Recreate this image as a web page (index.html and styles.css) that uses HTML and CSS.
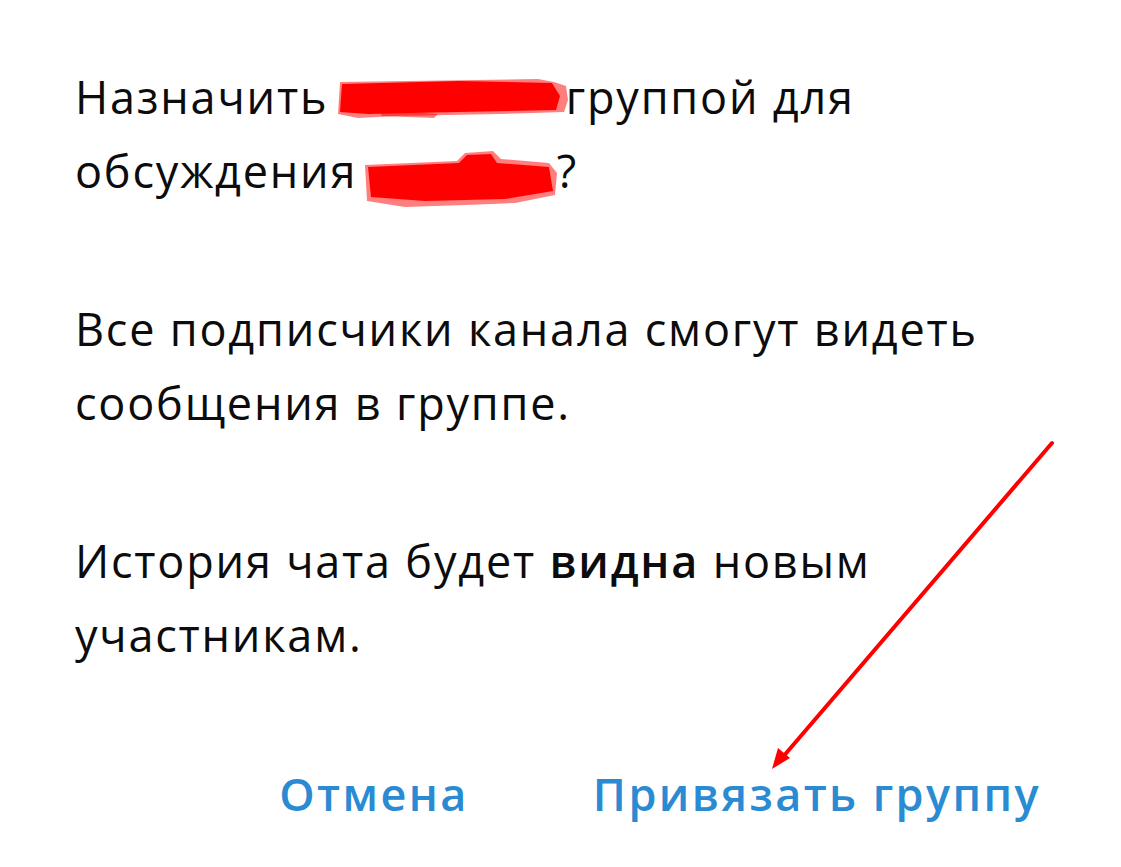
FILE: index.html
```html
<!DOCTYPE html>
<html lang="ru">
<head>
<meta charset="utf-8">
<title>Привязать группу</title>
<link rel="stylesheet" href="styles.css">
</head>
<body>
<div class="dialog">
  <div class="content">
    <p class="para">Назначить <span class="redact redact-a"><svg viewBox="0 0 230 40" width="230" height="40"><path d="M2 4 L200 1 L216 4 L228 8 L230 22 L226 34 L160 36 L60 38 L20 40 L0 36 Z" fill="#ff0000" opacity="0.5"/><path d="M4 6 L120 3 L214 5 L222 18 L218 32 L120 34 L30 36 L2 34 Z" fill="#ff0000"/><path d="M40 32 L100 36 L96 40 L44 38 Z" fill="#ff0000" opacity="0.5"/></svg></span>группой для обсуждения <span class="redact redact-b"><svg viewBox="0 0 192 56" width="192" height="56"><path d="M0 14 L92 10 L100 2 L128 0 L136 8 L184 12 L192 22 L190 44 L150 52 L100 54 L40 56 L2 50 Z" fill="#ff0000" opacity="0.5"/><path d="M3 16 L94 12 L102 4 L126 3 L132 12 L184 16 L188 40 L140 48 L60 50 L6 46 Z" fill="#ff0000"/></svg></span>?</p>
    <p class="para">Все подписчики канала смогут видеть сообщения в группе.</p>
    <p class="para">История чата будет <b class="strong">видна</b> новым участникам.</p>
  </div>
  <div class="actions">
    <span class="btn">Отмена</span>
    <span class="btn">Привязать группу</span>
  </div>
</div>
<svg class="arrow" viewBox="0 0 1121 867" width="1121" height="867">
  <line x1="1052" y1="443" x2="782" y2="758" stroke="#ff0000" stroke-width="4" stroke-linecap="round"/>
  <polygon points="772,769 778,748 790,758" fill="#ff0000"/>
</svg>
</body>
</html>
```

FILE: styles.css
```css
html, body {
  margin: 0;
  padding: 0;
  background: #ffffff;
}
body {
  width: 1121px;
  height: 867px;
  overflow: hidden;
  position: relative;
  font-family: "Open Sans", "Noto Sans", sans-serif;
  color: #0c0c0c;
}
.dialog {
  display: flex;
  flex-direction: column;
  padding: 60px 80px 0 75px;
}
.content {
  display: flex;
  flex-direction: column;
  gap: 84px;
  width: 960px;
}
.para {
  margin: 0;
  font-size: 45px;
  line-height: 74px;
  letter-spacing: 1.8px;
}
.strong {
  font-weight: 600;
}
.redact {
  display: inline-block;
  vertical-align: middle;
  line-height: 0;
}
.redact-a {
  width: 230px;
  height: 40px;
  margin-left: -4px;
  margin-right: -2px;
  transform: translateY(-4px);
}
.redact-b {
  width: 192px;
  height: 56px;
  margin-left: -6px;
  transform: translateY(3px);
}
.actions {
  display: flex;
  justify-content: flex-end;
  gap: 124px;
  margin-top: 92px;
}
.btn {
  font-size: 45px;
  line-height: 60px;
  font-weight: 600;
  letter-spacing: 2.4px;
  color: #2a8ad2;
}
.arrow {
  position: absolute;
  left: 0;
  top: 0;
  pointer-events: none;
}
```
